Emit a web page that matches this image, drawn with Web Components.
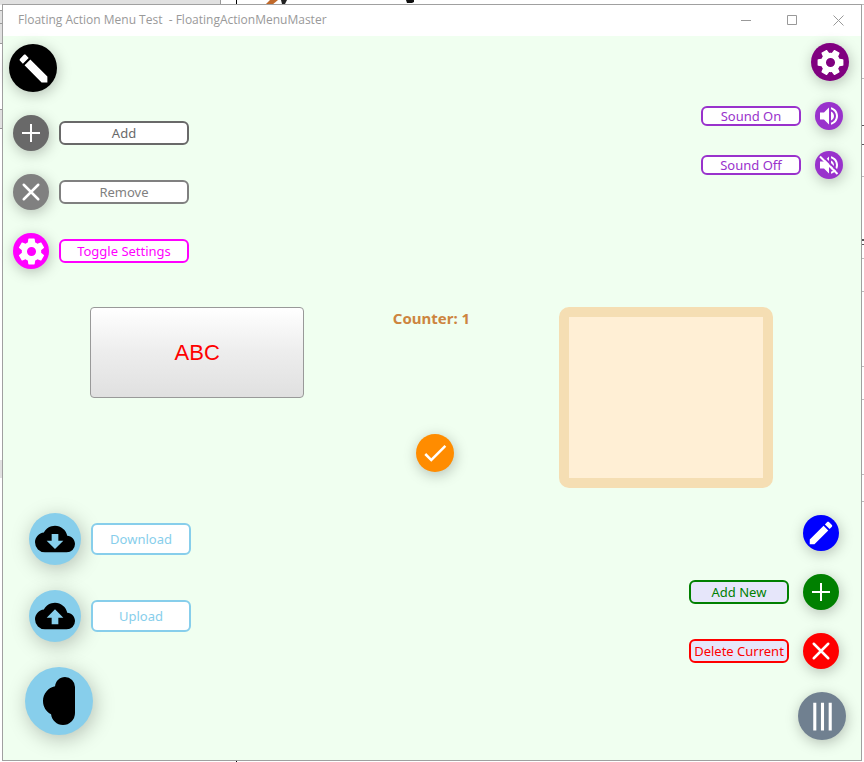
<!DOCTYPE html>
<html lang="en">
<head>
<meta charset="utf-8">
<title>Floating Action Menu Test</title>
<style>
  html, body { margin: 0; }
  body { background: #fff; font-family: "Noto Sans", "Open Sans", sans-serif; }
</style>
</head>
<body>
<desk-top>
  <app-window heading="Floating Action Menu Test &nbsp;- FloatingActionMenuMaster">
    <fab-menu slot="top-left" style="--start:6px;--gap:23px;--inset:4px;--top:8px">
      <fab-button icon="pencil" label="Edit menu" turned style="--size:48px;--icon:37px;--fill:#000"></fab-button>
      <fab-item icon="plus" style="--fill:#696969;--text:130px">Add</fab-item>
      <fab-item icon="cross" style="--fill:#808080;--text:130px">Remove</fab-item>
      <fab-item icon="cog" style="--fill:#f0f;--text:130px;--icon:31px">Toggle Settings</fab-item>
    </fab-menu>
    <fab-menu slot="top-right" end style="--end:12px;--gap:21px;--inset:6px;--top:7px">
      <fab-button icon="cog" label="Settings menu" turned style="--size:38px;--icon:31px;--fill:#800080"></fab-button>
      <fab-item icon="sound" end style="--fill:#9932cc;--size:28px;--icon:24px;--tall:20px">Sound On</fab-item>
      <fab-item icon="mute" end style="--fill:#9932cc;--size:28px;--icon:24px;--tall:20px">Sound Off</fab-item>
    </fab-menu>
    <abc-button slot="first">ABC</abc-button>
    <counter-panel slot="second" value="1"></counter-panel>
    <frame-box slot="third"></frame-box>
    <fab-menu slot="bottom-left" style="--start:22px;--gap:25px;--inset:4px;--bottom:25px;--shadow:2px 4px 20px rgba(0,0,0,.25)">
      <fab-item icon="download" style="--fill:#87ceeb;--ink:#000;--size:52px;--icon:40px;--tall:32px">Download</fab-item>
      <fab-item icon="upload" style="--fill:#87ceeb;--ink:#000;--size:52px;--icon:40px;--tall:32px">Upload</fab-item>
      <fab-button icon="cloud" label="Cloud menu" turned style="--size:68px;--icon:48px;--fill:#87ceeb;--ink:#000"></fab-button>
    </fab-menu>
    <fab-menu slot="bottom-right" end style="--end:15px;--gap:23px;--inset:7px;--bottom:20px">
      <fab-item icon="pencil" end bare label="Edit" style="--fill:#00f"></fab-item>
      <fab-item icon="plus" end style="--fill:#008000;--paper:#e6e6fa">Add New</fab-item>
      <fab-item icon="cross" end style="--fill:#f00;--paper:#e6e6fa">Delete Current</fab-item>
      <fab-button icon="menu" label="Main menu" turned style="--size:48px;--icon:37px;--fill:#708090"></fab-button>
    </fab-menu>
  </app-window>
</desk-top>

<script>
const CLOUD = 'M19.35 10.03C18.67 6.59 15.64 4 12 4 9.11 4 6.6 5.64 5.35 8.03 2.34 8.36 0 10.9 0 14a6 6 0 0 0 6 6H19a5 5 0 0 0 5-5C24 12.36 21.95 10.22 19.35 10.03Z';
const SPEAKER = 'M3 8.6V15.4H7L12 20.5V3.5L7 8.6Z';
const WAVES = 'M14 3.23V5.29C16.89 6.15 19 8.83 19 12S16.89 17.84 14 18.7V20.77C18 19.86 21 16.28 21 12S18 4.14 14 3.23ZM17 12C17 10 15.8 8.2 14 7.4V16.6C15.8 15.8 17 14 17 12Z';
const ICONS = {
  pencil: '<path d="M20.71 7.04C21.1 6.65 21.1 6 20.71 5.63L18.37 3.29C18 2.9 17.35 2.9 16.96 3.29L15.12 5.12 18.87 8.87ZM3 17.25V21H6.75L17.81 9.94 14.06 6.19Z"/>',
  cog: '<path d="M12 15.5A3.5 3.5 0 0 1 8.5 12 3.5 3.5 0 0 1 12 8.5 3.5 3.5 0 0 1 15.5 12 3.5 3.5 0 0 1 12 15.5M19.43 12.97C19.47 12.65 19.5 12.33 19.5 12S19.47 11.34 19.43 11L21.54 9.37C21.73 9.22 21.78 8.95 21.66 8.73L19.66 5.27C19.54 5.05 19.27 4.96 19.05 5.05L16.56 6.05C16.04 5.66 15.5 5.32 14.87 5.07L14.5 2.42C14.46 2.18 14.25 2 14 2H10C9.75 2 9.54 2.18 9.5 2.42L9.13 5.07C8.5 5.32 7.96 5.66 7.44 6.05L4.95 5.05C4.73 4.96 4.46 5.05 4.34 5.27L2.34 8.73C2.21 8.95 2.27 9.22 2.46 9.37L4.57 11C4.53 11.34 4.5 11.67 4.5 12S4.53 12.65 4.57 12.97L2.46 14.63C2.27 14.78 2.21 15.05 2.34 15.27L4.34 18.73C4.46 18.95 4.73 19.03 4.95 18.95L7.44 17.94C7.96 18.34 8.5 18.68 9.13 18.93L9.5 21.58C9.54 21.82 9.75 22 10 22H14C14.25 22 14.46 21.82 14.5 21.58L14.87 18.93C15.5 18.67 16.04 18.34 16.56 17.94L19.05 18.95C19.27 19.03 19.54 18.95 19.66 18.73L21.66 15.27C21.78 15.05 21.73 14.78 21.54 14.63Z"/>',
  plus: '<path fill="none" stroke="currentColor" stroke-width="1.6" d="M12 4.8V19.2M4.8 12H19.2"/>',
  cross: '<path fill="none" stroke="currentColor" stroke-width="2" stroke-linecap="round" d="M6.2 6.2 17.8 17.8M17.8 6.2 6.2 17.8"/>',
  check: '<path d="M21 7 9 19 3.5 13.5 4.91 12.09 9 16.17 19.59 5.59Z"/>',
  sound: `<path d="${SPEAKER}${WAVES}"/>`,
  mute: `<path d="${SPEAKER}${WAVES}"/><path fill="none" stroke="var(--fill)" stroke-width="2" d="M4.5 2 22 19.5"/><path fill="none" stroke="currentColor" stroke-width="2" d="M3 3.5 20.5 21"/>`,
  cloud: `<path d="${CLOUD}"/>`,
  download: `<path d="${CLOUD}"/><path fill="var(--fill)" d="M17 13 12 18 7 13H10V9H14V13Z"/>`,
  upload: `<path d="${CLOUD}"/><path fill="var(--fill)" d="M14 13V17H10V13H7L12 8 17 13Z"/>`,
  menu: '<path d="M3 6H21V8H3ZM3 11H21V13H3ZM3 16H21V18H3Z"/>'
};
const svg = name => `<svg viewBox="0 0 24 24" aria-hidden="true">${ICONS[name]}</svg>`;
const DISC = `
  .disc { flex: none; width: var(--size, 36px); height: var(--size, 36px); border-radius: 50%;
    background: var(--fill); color: var(--ink, #fff); display: grid; place-items: center;
    box-shadow: var(--shadow, 1px 3px 14px rgba(0,0,0,.25)); }
  svg { width: var(--icon, 30px); height: var(--icon, 30px); fill: currentColor; display: block; }
  button { font: inherit; border: 0; padding: 0; background: none; cursor: pointer; }`;

const define = (name, render) => customElements.define(name, class extends HTMLElement {
  connectedCallback() {
    if (!this.shadowRoot) this.attachShadow({ mode: 'open' }).innerHTML = render(this);
  }
});

define('desk-top', () => `
  <style>
    :host { box-sizing: border-box; position: relative; min-height: 100vh; padding: 4px 2px 1px; display: grid; }
    svg { position: absolute; inset: 0; width: 100%; height: 100%; }
    .edge { left: auto; right: 0; width: 2px; }
    ::slotted(*) { position: relative; }
  </style>
  <svg aria-hidden="true">
    <path fill="#e1e1e1" d="M0 0H221V5H0ZM0 11H2V43H0ZM0 110H2V128H0ZM0 460H2V478H0Z"/>
    <path fill="#999" d="M220 0H221V5H220ZM0 10H2V11H0ZM0 23H2V24H0ZM0 43H2V44H0ZM0 109H2V110H0ZM0 128H2V129H0Z"/>
    <path fill="#000" d="M236 0H237V5H236ZM236 760H237V762H236Z"/>
    <path fill="#c0692a" d="M270 0H278L272 5H265Z"/>
    <path fill="#222" d="M281 0H287L285 4H282Z"/>
    <path fill="#111" d="M406 0H414V2L412 3H407Z"/>
  </svg>
  <svg class="edge" aria-hidden="true">
    <path fill="#bbb" d="M0 4H2V5H0ZM0 78H2V79H0ZM0 176H2V177H0ZM0 258H2V259H0ZM0 291H2V292H0ZM0 366H2V367H0ZM0 399H2V400H0ZM0 474H2V475H0ZM0 501H2V502H0Z"/>
    <path fill="#555" d="M0 125H2V126H0ZM0 144H2V145H0ZM0 239H2V241H0ZM0 244H2V245H0Z"/>
  </svg>
  <slot></slot>`);

define('app-window', el => `
  <style>
    :host { display: flex; flex-direction: column; border: 1px solid #a0a0a0; background: #fff; }
    header { display: flex; justify-content: space-between; height: 31px; color: #999; }
    h1 { margin: 0; padding-left: 15px; font: 400 12px/30px "Open Sans", "Noto Sans", sans-serif; white-space: pre; }
    nav { display: flex; }
    nav button { width: 46px; border: 0; padding: 0; background: none; color: inherit; display: grid; place-items: center; }
    nav svg { width: 11px; height: 11px; fill: none; stroke: currentColor; }
    main { flex: 1; background: #f0fff0; display: grid; grid-template-rows: auto 1fr auto; }
    .bar { display: flex; justify-content: space-between; }
    .low { align-items: flex-end; }
    .mid { display: grid; grid-template-columns: repeat(3, 1fr); gap: 20px; padding: 38px 88px 25px 87px; align-items: start; }
  </style>
  <header>
    <h1>${el.getAttribute('heading')}</h1>
    <nav>
      <button aria-label="Minimize"><svg viewBox="0 0 11 11"><path d="M0 5.5H10"/></svg></button>
      <button aria-label="Maximize"><svg viewBox="0 0 11 11"><path d="M.5.5H9.5V9.5H.5Z"/></svg></button>
      <button aria-label="Close"><svg viewBox="0 0 11 11"><path d="M.5.5 10.5 10.5M10.5.5.5 10.5"/></svg></button>
    </nav>
  </header>
  <main>
    <div class="bar"><slot name="top-left"></slot><slot name="top-right"></slot></div>
    <div class="mid"><slot name="first"></slot><slot name="second"></slot><slot name="third"></slot></div>
    <div class="bar low"><slot name="bottom-left"></slot><slot name="bottom-right"></slot></div>
  </main>`);

define('fab-menu', () => `
  <style>
    :host { display: flex; flex-direction: column; align-items: flex-start; gap: var(--gap);
      padding: var(--top, 0) var(--end, 0) var(--bottom, 0) var(--start, 0); }
    :host([end]) { align-items: flex-end; }
    ::slotted(fab-item) { margin-inline: var(--inset); }
  </style>
  <slot></slot>`);

define('fab-button', el => `
  <style>
    ${DISC}
    :host { display: block; }
    :host([turned]) svg { transform: rotate(-90deg); }
  </style>
  <button class="disc" aria-label="${el.getAttribute('label')}">${svg(el.getAttribute('icon'))}</button>`);

define('fab-item', el => `
  <style>
    ${DISC}
    :host { display: block; }
    .row { display: flex; align-items: center; gap: 10px; }
    :host([end]) .row { flex-direction: row-reverse; gap: 14px; }
    .text { box-sizing: border-box; width: var(--text, 100px); height: var(--tall, 24px);
      border: 2px solid var(--fill); border-radius: 6px; background: var(--paper, #fff); color: var(--fill);
      display: flex; align-items: center; justify-content: center; font-size: 13px; line-height: 16px; white-space: nowrap; }
    :host([bare]) .text { display: none; }
  </style>
  <button class="row"${el.hasAttribute('label') ? ` aria-label="${el.getAttribute('label')}"` : ''}>
    <span class="disc">${svg(el.getAttribute('icon'))}</span><span class="text"><slot></slot></span>
  </button>`);

define('abc-button', () => `
  <style>
    :host { display: block; }
    button { display: block; width: 100%; height: 91px; border: 1px solid #999; border-radius: 4px;
      background: linear-gradient(#fff, #ededed 50%, #e0e0e0); color: #f00; font: 22px "Liberation Sans", sans-serif; }
  </style>
  <button><slot></slot></button>`);

define('counter-panel', el => `
  <style>
    ${DISC}
    :host { display: flex; flex-direction: column; align-items: center; justify-content: space-between; height: 165px; }
    output { color: #cd853f; font: 700 15px/22px "Noto Sans", "Open Sans", sans-serif; }
    .disc { --size: 38px; --fill: #ff8c00; margin-left: 8px; }
  </style>
  <output>Counter: ${el.getAttribute('value')}</output>
  <button class="disc" aria-label="Confirm">${svg('check')}</button>`);

define('frame-box', () => `
  <style>
    :host { display: block; box-sizing: border-box; height: 181px; border: 10px solid #f5deb3; border-radius: 10px; background: #ffefd5; }
  </style>`);
</script>
</body>
</html>
